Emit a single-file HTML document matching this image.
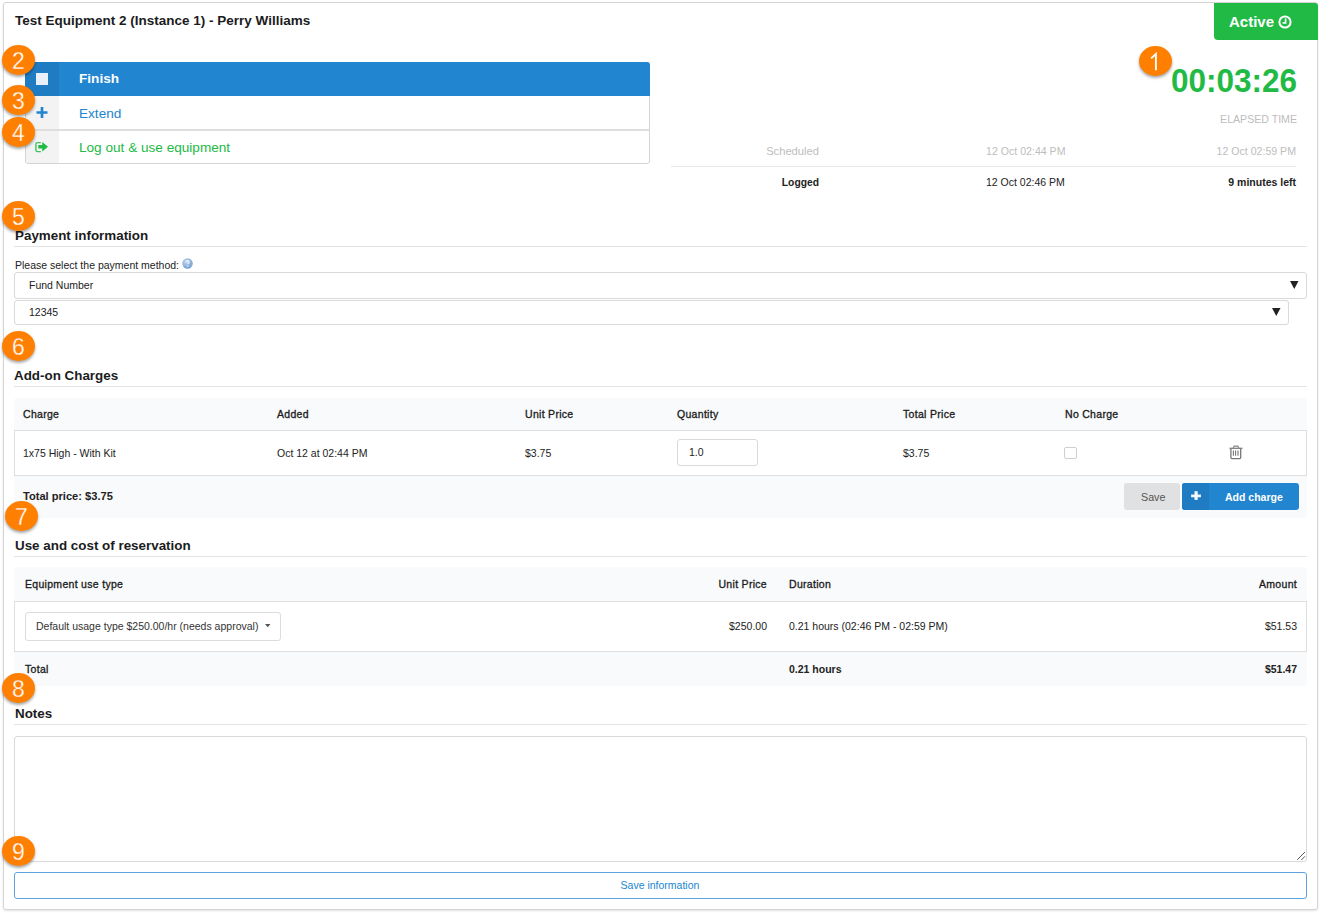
<!DOCTYPE html>
<html><head><meta charset="utf-8">
<style>
*{box-sizing:border-box;margin:0;padding:0}
html,body{width:1331px;height:913px;overflow:hidden;background:#fff}
body{font-family:"Liberation Sans",sans-serif;color:#222;position:relative}
.a{position:absolute;white-space:nowrap;line-height:1}
.b{font-weight:bold}
.r{text-align:right}
.panel{position:absolute;left:3px;top:2px;width:1315px;height:908px;border:1px solid #d4d4d5;border-radius:3px;box-shadow:0 1px 2px rgba(0,0,0,.12)}
.hline{position:absolute;left:14px;width:1293px;height:1px;background:#e3e3e3}
.h{font-size:13.4px;font-weight:bold;color:#1b1c1d}
.s{font-size:10.5px}
.th{font-size:10.5px;color:#1b1c1d;-webkit-text-stroke:0.32px #1b1c1d;letter-spacing:0.3px}
.badge{position:absolute;width:33px;height:30px;border-radius:50%;background:#ff8000;color:#fff;font-size:23px;text-align:center;line-height:32px;box-shadow:0 2px 3px rgba(0,0,0,.35);-webkit-text-stroke:0.3px #ff8000}
svg{position:absolute;overflow:visible}
</style></head><body>
<div class="panel"></div>

<!-- title -->
<div class="a b" style="left:15px;top:14px;font-size:13.5px;color:#1b1c1d">Test Equipment 2 (Instance 1) - Perry Williams</div>

<!-- active -->
<div class="a" style="left:1214px;top:3px;width:104px;height:37px;background:#21ba45;border-radius:0 3px 0 4px"></div>
<div class="a b" style="left:1229px;top:14px;font-size:15px;color:#fff">Active</div>
<svg style="left:1278px;top:15px" width="14" height="14" viewBox="0 0 14 14"><circle cx="7" cy="7" r="5.6" fill="none" stroke="#fff" stroke-width="2"/><path d="M7.6 3.6V7.9H4.6" fill="none" stroke="#fff" stroke-width="1.6"/></svg>

<!-- menu -->
<div class="a" style="left:25px;top:62px;width:625px;height:102px;border:1px solid #d4d4d5;border-radius:3px"></div>
<div class="a" style="left:26px;top:96px;width:33px;height:67px;background:#f3f3f3;border-radius:0 0 0 2px"></div>
<div class="a" style="left:26px;top:129px;width:623px;height:2px;background:#dedede"></div>
<div class="a" style="left:25px;top:62px;width:625px;height:34px;background:#2185d0;border-radius:3px 3px 0 0"></div>
<div class="a" style="left:25px;top:62px;width:34px;height:34px;background:#1f7cc3;border-radius:3px 0 0 0"></div>
<div class="a" style="left:36px;top:73px;width:12px;height:12px;background:#e8f1f9"></div>
<svg style="left:36px;top:107px" width="12" height="11"><path d="M6 0V11M0.5 5.5H11.5" stroke="#2185d0" stroke-width="2.7"/></svg>
<svg style="left:35px;top:142px" width="14" height="11" viewBox="0 0 14 11"><path d="M5.8 0.6H2.6Q0.9 0.6 0.9 2.3V7.9Q0.9 9.6 2.6 9.6H5.8" fill="none" stroke="#21ba45" stroke-width="1.4" opacity=".85"/><path d="M3.3 3H7.25V-0.1L13 4.75L7.25 9.6V6.6H3.3Z" fill="#21ba45"/></svg>
<div class="a b" style="left:79px;top:72px;font-size:13.6px;color:#fff">Finish</div>
<div class="a" style="left:79px;top:107px;font-size:13.6px;color:#2185d0">Extend</div>
<div class="a" style="left:79px;top:141px;font-size:13.6px;color:#21ba45">Log out &amp; use equipment</div>

<!-- timer -->
<div class="a b" style="left:1171px;top:66px;font-size:31.5px;color:#21ba45;transform:scaleY(1.05);transform-origin:0 26px">00:03:26</div>
<div class="a r" style="right:34px;top:114px;font-size:10.6px;color:#bdbdbd">ELAPSED TIME</div>
<div class="a r" style="right:512px;top:146px;font-size:11.2px;color:#bdbdbd">Scheduled</div>
<div class="a" style="left:986px;top:146px;font-size:10.6px;color:#bdbdbd">12 Oct 02:44 PM</div>
<div class="a r" style="right:35px;top:146px;font-size:10.6px;color:#bdbdbd">12 Oct 02:59 PM</div>
<div class="a" style="left:671px;top:166px;width:625px;height:1px;background:#e8e8e8"></div>
<div class="a b r" style="right:512px;top:178px;font-size:10.3px">Logged</div>
<div class="a" style="left:986px;top:177px;font-size:10.5px">12 Oct 02:46 PM</div>
<div class="a b r" style="right:35px;top:177px;font-size:10.5px">9 minutes left</div>

<!-- payment -->
<div class="a h" style="left:15px;top:229px">Payment information</div>
<div class="hline" style="top:246px"></div>
<div class="a s" style="left:15px;top:260px">Please select the payment method:</div>
<svg style="left:181.5px;top:257.5px" width="11" height="11" viewBox="0 0 11 11"><defs><radialGradient id="hg" cx="40%" cy="35%" r="70%"><stop offset="0" stop-color="#c2d6ee"/><stop offset="1" stop-color="#6f9bd2"/></radialGradient></defs><circle cx="5.5" cy="5.5" r="5.2" fill="url(#hg)"/><path d="M3.9 4.2C3.9 3.2 4.6 2.6 5.5 2.6S7.1 3.2 7.1 4C7.1 4.9 5.9 5 5.9 6.1" fill="none" stroke="#fff" stroke-width="1.1" opacity=".85"/><circle cx="5.8" cy="7.9" r=".7" fill="#fff" opacity=".85"/></svg>
<div class="a" style="left:14px;top:272px;width:1293px;height:27px;border:1px solid #d9d9d9;border-radius:3px"></div>
<div class="a s" style="left:29px;top:280px">Fund Number</div>
<svg style="left:1290px;top:281px" width="9" height="8"><path d="M0 0H8.5L4.25 8Z" fill="#222"/></svg>
<div class="a" style="left:14px;top:300px;width:1275px;height:25px;border:1px solid #d9d9d9;border-radius:3px"></div>
<div class="a s" style="left:29px;top:307px">12345</div>
<svg style="left:1272px;top:308px" width="9" height="8"><path d="M0 0H8.5L4.25 8Z" fill="#222"/></svg>

<!-- addon -->
<div class="a h" style="left:14px;top:369px">Add-on Charges</div>
<div class="hline" style="top:386px"></div>
<div class="a" style="left:14px;top:398px;width:1293px;height:120px;background:#f9fafb;border-radius:3px"></div>
<div class="a" style="left:14px;top:430px;width:1293px;height:46px;background:#fff;border:1px solid #dedede"></div>
<div class="a th" style="left:23px;top:409px">Charge</div>
<div class="a th" style="left:277px;top:409px">Added</div>
<div class="a th" style="left:525px;top:409px">Unit Price</div>
<div class="a th" style="left:677px;top:409px">Quantity</div>
<div class="a th" style="left:903px;top:409px">Total Price</div>
<div class="a th" style="left:1065px;top:409px">No Charge</div>
<div class="a s" style="left:23px;top:448px">1x75 High - With Kit</div>
<div class="a s" style="left:277px;top:448px">Oct 12 at 02:44 PM</div>
<div class="a s" style="left:525px;top:448px">$3.75</div>
<div class="a" style="left:677px;top:439px;width:81px;height:27px;border:1px solid #d9d9d9;border-radius:3px;background:#fff"></div>
<div class="a s" style="left:689px;top:447px">1.0</div>
<div class="a s" style="left:903px;top:448px">$3.75</div>
<div class="a" style="left:1064px;top:447px;width:13px;height:12px;border:1px solid #cfcfcf;border-radius:2px;background:#fff"></div>
<svg style="left:1229px;top:445px" width="14" height="15" viewBox="0 0 14 15"><path d="M0.5 3.3H13.5" stroke="#777" stroke-width="1.2"/><path d="M4.2 3.1L5.1 1.2H8.9L9.8 3.1" fill="none" stroke="#888" stroke-width="1.2"/><path d="M1.9 3.5V12.6Q1.9 13.7 3 13.7H10.6Q11.7 13.7 11.7 12.6V3.5" fill="none" stroke="#777" stroke-width="1.3"/><path d="M4.4 5.5V10.8M6.6 5.5V10.8M9 5.5V10.8" stroke="#777" stroke-width="1.1"/></svg>
<div class="a b" style="left:23px;top:491px;font-size:11.1px">Total price: $3.75</div>
<div class="a" style="left:1124px;top:483px;width:56px;height:27px;background:#e0e1e2;border-radius:3px"></div>
<div class="a s" style="left:1141px;top:492px;color:#555;font-size:10.7px">Save</div>
<div class="a" style="left:1182px;top:483px;width:117px;height:27px;background:#2185d0;border-radius:3px;overflow:hidden"><div class="a" style="left:0;top:0;width:27px;height:27px;background:#1f7cc3"></div></div>
<svg style="left:1191px;top:491px" width="10" height="9"><path d="M5.1 0.2V8.9" stroke="#f4f8fc" stroke-width="3.2"/><path d="M0.1 4.9H9.9" stroke="#f4f8fc" stroke-width="2.7"/></svg>
<div class="a b" style="left:1225px;top:492px;font-size:10.5px;color:#fff">Add charge</div>

<!-- use -->
<div class="a h" style="left:15px;top:539px">Use and cost of reservation</div>
<div class="hline" style="top:556px"></div>
<div class="a" style="left:14px;top:567px;width:1293px;height:119px;background:#f9fafb;border-radius:3px"></div>
<div class="a" style="left:14px;top:601px;width:1293px;height:51px;background:#fff;border:1px solid #dedede"></div>
<div class="a th" style="left:25px;top:579px">Equipment use type</div>
<div class="a th r" style="right:564px;top:579px">Unit Price</div>
<div class="a th" style="left:789px;top:579px">Duration</div>
<div class="a th r" style="right:34px;top:579px">Amount</div>
<div class="a" style="left:25px;top:612px;width:256px;height:29px;border:1px solid #dcdcdc;border-radius:3px;background:#fff"></div>
<div class="a s" style="left:36px;top:621px;color:#333">Default usage type $250.00/hr (needs approval)</div>
<svg style="left:265px;top:624px" width="6" height="4"><path d="M0 0H5.5L2.75 3.2Z" fill="#555"/></svg>
<div class="a s r" style="right:564px;top:621px">$250.00</div>
<div class="a s" style="left:789px;top:621px">0.21 hours (02:46 PM - 02:59 PM)</div>
<div class="a s r" style="right:34px;top:621px">$51.53</div>
<div class="a th" style="left:25px;top:664px">Total</div>
<div class="a b s" style="left:789px;top:664px">0.21 hours</div>
<div class="a b s r" style="right:34px;top:664px">$51.47</div>

<!-- notes -->
<div class="a h" style="left:15px;top:707px">Notes</div>
<div class="hline" style="top:724px"></div>
<div class="a" style="left:14px;top:736px;width:1293px;height:126px;border:1px solid #d9d9d9;border-radius:3px"></div>
<svg style="left:1296px;top:850px" width="9" height="9"><path d="M9 2L1.3 9.7M9 6.3L5.3 10" stroke="#555" stroke-width="1"/></svg>
<div class="a" style="left:14px;top:872px;width:1293px;height:27px;border:1px solid #5ea2dd;border-radius:3px"></div>
<div class="a s" style="left:0;width:1320px;text-align:center;top:880px;color:#2185d0">Save information</div>

<!-- badges -->
<div class="badge" style="left:1139px;top:46px"><svg style="left:0;top:0" width="33" height="30"><path d="M12.2 12.4L16.9 7.9V24.3" fill="none" stroke="#fff" stroke-width="1.9" stroke-linejoin="miter"/></svg></div>
<div class="badge" style="left:2px;top:45px">2</div>
<div class="badge" style="left:2px;top:85px">3</div>
<div class="badge" style="left:2px;top:117px">4</div>
<div class="badge" style="left:2px;top:201px">5</div>
<div class="badge" style="left:2px;top:331px">6</div>
<div class="badge" style="left:5px;top:501px">7</div>
<div class="badge" style="left:2px;top:673px">8</div>
<div class="badge" style="left:2px;top:836px">9</div>
</body></html>
